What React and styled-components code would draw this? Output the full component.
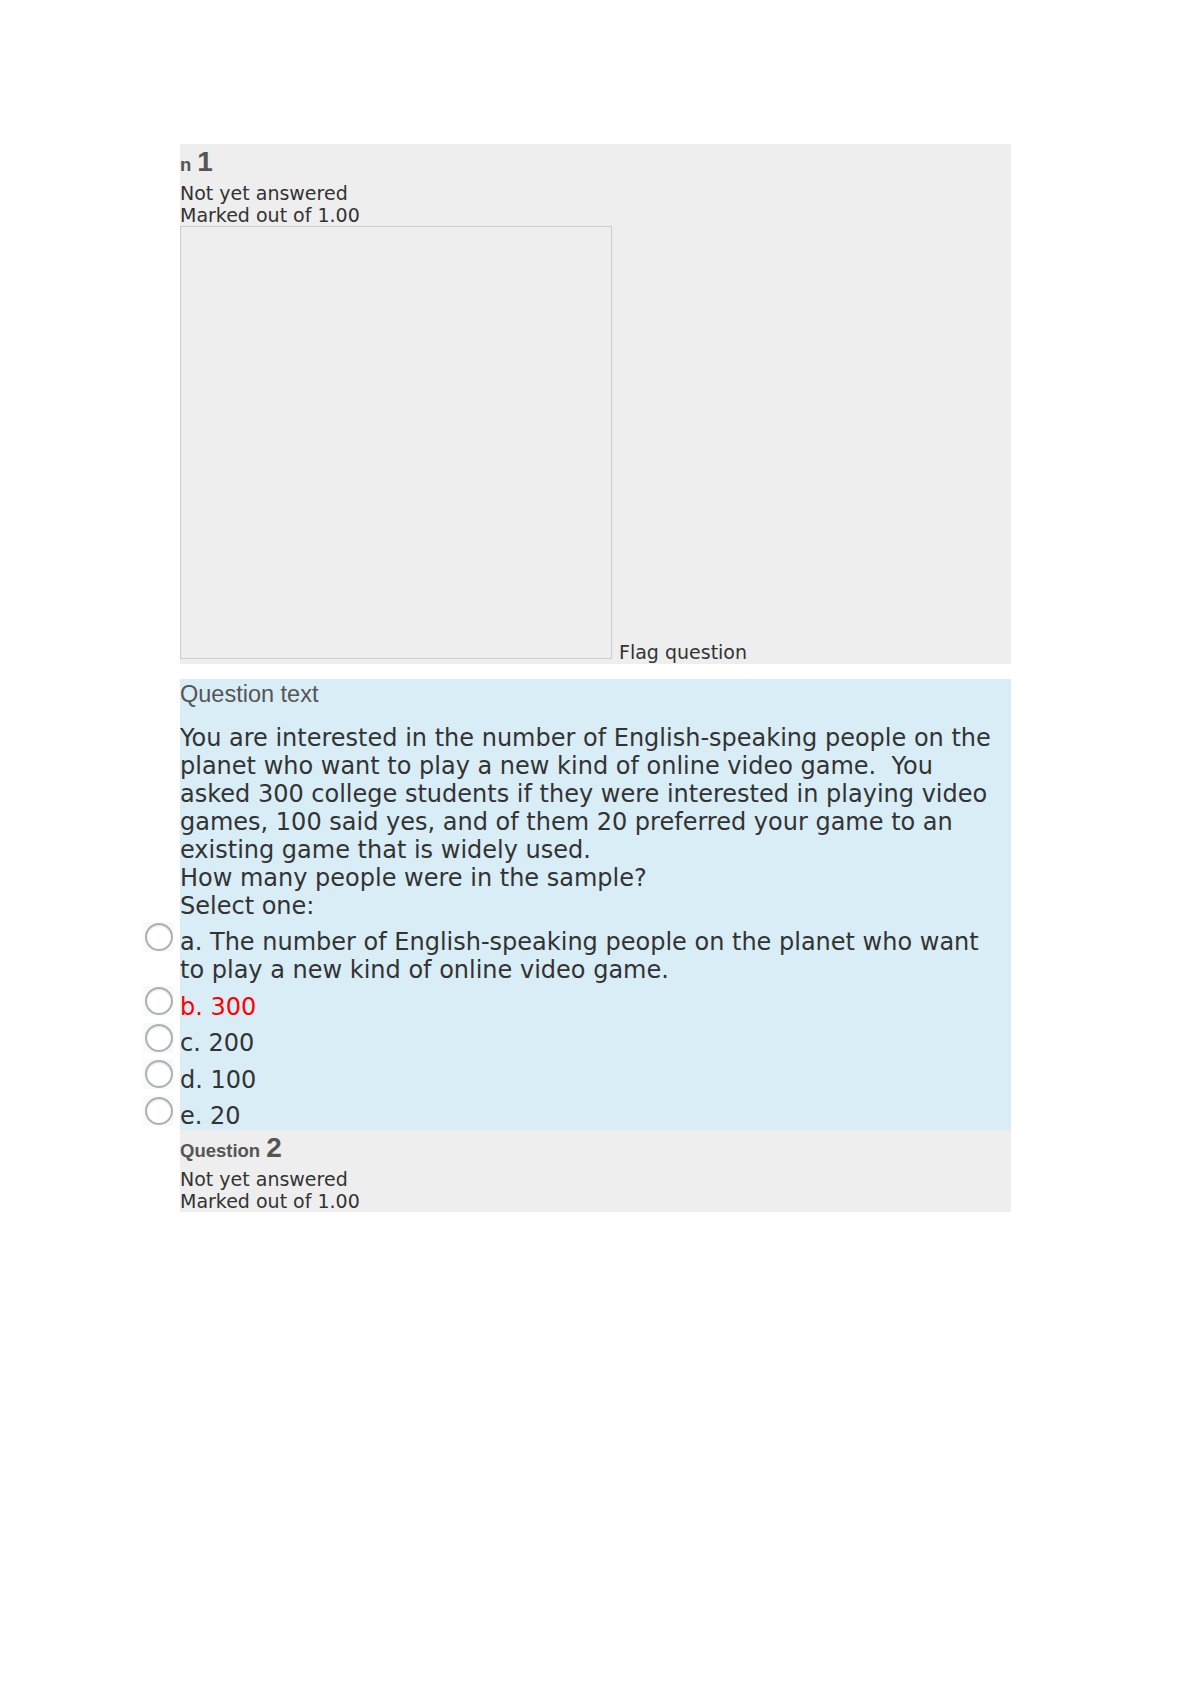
import React from 'react'
import styled, { createGlobalStyle } from 'styled-components'

const GlobalStyle = createGlobalStyle`
  body {
    margin: 0;
    background: #fff;
    font-family: 'DejaVu Sans', sans-serif;
    color: #333;
  }
`

const Page = styled.div`
  width: 831px;
  padding: 144px 0 0 180px;
`

const Info = styled.div`
  background: #eee;
  margin-bottom: ${props => (props.gap ? '15px' : '0')};
`

const Header = styled.h3`
  margin: 0;
  height: 39px;
  line-height: 36px;
  font-family: 'Liberation Sans', Arial, sans-serif;
  font-weight: bold;
  font-size: 18.5px;
  color: #555;
  white-space: nowrap;
`

const QNo = styled.span`
  font-size: 28px;
  margin-left: 6px;
`

const State = styled.div`
  font-size: 19px;
  line-height: 21.5px;
  color: #333;
`

const FlagLine = styled.div`
  font-size: 19px;
  line-height: 21.5px;
  color: #333;
`

const Frame = styled.span`
  display: inline-block;
  width: 432px;
  height: 433px;
  box-sizing: border-box;
  border: 1px solid #ccc;
  background: #eee;
  margin-right: 7px;
  vertical-align: baseline;
`

const Formulation = styled.div`
  background: #d9edf7;
  padding-top: 1px;
`

const Title = styled.h4`
  margin: 0 0 16px;
  font-family: 'Liberation Sans', Arial, sans-serif;
  font-weight: normal;
  font-size: 23.5px;
  line-height: 28px;
  color: #555;
`

const Body = styled.div`
  padding-right: 18px;
  font-size: 24px;
  line-height: 28px;
  color: #333;
`

const Options = styled.div`
  margin-left: -38px;
`

const Option = styled.div`
  display: flex;
  align-items: flex-start;
  padding-left: 1px;
`

const RadioCell = styled.span`
  flex: none;
  width: 31px;
  height: 30px;
  margin-top: 2px;
  margin-right: 6px;
  background: #f7fafc;
  display: flex;
  align-items: center;
  justify-content: center;
`

const Radio = styled.span`
  width: 24px;
  height: 24px;
  border-radius: 50%;
  border: 2px solid #b0b0b0;
  background: #fff;
  box-shadow: inset 0 1px 2px rgba(0, 0, 0, 0.12);
`

const Label = styled.span`
  padding-top: 8.5px;
  padding-right: 8px;
  font-size: 24px;
  line-height: 28px;
  color: ${props => (props.wrong ? '#f00' : '#333')};
`

const answers = [
  { key: 'a', text: 'The number of English-speaking people on the planet who want to play a new kind of online video game.' },
  { key: 'b', text: '300', wrong: true },
  { key: 'c', text: '200' },
  { key: 'd', text: '100' },
  { key: 'e', text: '20' },
]

const App = () => (
  <Page>
    <GlobalStyle />
    <Info gap>
      <Header>
        n<QNo>1</QNo>
      </Header>
      <State>Not yet answered</State>
      <State>Marked out of 1.00</State>
      <FlagLine>
        <Frame />
        Flag question
      </FlagLine>
    </Info>
    <Formulation>
      <Title>Question text</Title>
      <Body>
        You are interested in the number of English-speaking people on the planet who want to
        play a new kind of online video game.&nbsp; You asked 300 college students if they were
        interested in playing video games, 100 said yes, and of them 20 preferred your game to an
        existing game that is widely used.
        <br />
        How many people were in the sample?
        <br />
        Select one:
      </Body>
      <Options>
        {answers.map(a => (
          <Option key={a.key}>
            <RadioCell>
              <Radio />
            </RadioCell>
            <Label wrong={a.wrong}>{`${a.key}. ${a.text}`}</Label>
          </Option>
        ))}
      </Options>
    </Formulation>
    <Info>
      <Header>
        Question<QNo>2</QNo>
      </Header>
      <State>Not yet answered</State>
      <State>Marked out of 1.00</State>
    </Info>
  </Page>
)

export default App
